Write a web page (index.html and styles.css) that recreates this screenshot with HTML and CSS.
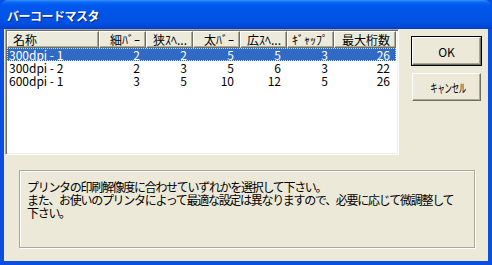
FILE: index.html
```html
<!DOCTYPE html>
<html lang="ja">
<head>
<meta charset="utf-8">
<link rel="stylesheet" href="styles.css">
</head>
<body>
<div class="window">
  <div class="titlebar"><span class="title">バーコードマスタ</span></div>
  <div class="frame">
    <div class="main">
      <div class="list">
        <div class="row head">
          <div class="c c1 l">名称</div>
          <div class="c c2">細ﾊﾞｰ</div>
          <div class="c c3">狭ｽﾍ...</div>
          <div class="c c4">太ﾊﾞｰ</div>
          <div class="c c5">広ｽﾍ...</div>
          <div class="c c6">ｷﾞｬｯﾌﾟ</div>
          <div class="c c7">最大桁数</div>
        </div>
        <div class="row sel">
          <div class="c c1 l">300dpi - 1</div>
          <div class="c c2">2</div>
          <div class="c c3">2</div>
          <div class="c c4">5</div>
          <div class="c c5">5</div>
          <div class="c c6">3</div>
          <div class="c c7">26</div>
        </div>
        <div class="row">
          <div class="c c1 l">300dpi - 2</div>
          <div class="c c2">2</div>
          <div class="c c3">3</div>
          <div class="c c4">5</div>
          <div class="c c5">6</div>
          <div class="c c6">3</div>
          <div class="c c7">22</div>
        </div>
        <div class="row">
          <div class="c c1 l">600dpi - 1</div>
          <div class="c c2">3</div>
          <div class="c c3">5</div>
          <div class="c c4">10</div>
          <div class="c c5">12</div>
          <div class="c c6">5</div>
          <div class="c c7">26</div>
        </div>
      </div>
      <div class="buttons">
        <button class="btn default">OK</button>
        <button class="btn"><span class="narrow">キャンセル</span></button>
      </div>
    </div>
    <div class="group">
      <p class="msg">プリンタの印刷解像度に合わせていずれかを選択して下さい。<br>また、お使いのプリンタによって最適な設定は異なりますので、必要に応じて微調整して<br>下さい。</p>
    </div>
  </div>
</div>
</body>
</html>
```

FILE: styles.css
```css
html, body {
  margin: 0;
  padding: 0;
  background: #ece9d8;
}
body {
  font-family: "Noto Sans CJK JP", "Liberation Sans", sans-serif;
  font-size: 12px;
  color: #000;
}
.window {
  width: 492px;
  height: 265px;
  display: flex;
  flex-direction: column;
  background: #0a4fe0;
}
.titlebar {
  height: 29px;
  flex: none;
  border-radius: 8px 8px 0 0;
  background: linear-gradient(to bottom, #3d95ff 0px, #0a6cf5 2px, #0058ee 5px, #0054e6 14px, #0052e2 22px, #0046d8 27px, #003dd0 29px);
  display: flex;
  align-items: center;
  padding-left: 7px;
  box-sizing: border-box;
}
.title {
  color: #fff;
  font-weight: bold;
  font-size: 12px;
  letter-spacing: -0.5px;
  text-shadow: 1px 1px 0 #0a1e8a;
  margin-top: 1px;
}
.frame {
  flex: 1;
  background: #ece9d8;
  margin: 0 4px 4px 4px;
  display: flex;
  flex-direction: column;
}
.main {
  display: flex;
  padding-left: 1px;
}
.list {
  width: 394px;
  height: 126px;
  box-sizing: border-box;
  background: #fff;
  border-top: 1px solid #aca899;
  border-left: 1px solid #aca899;
  border-right: 1px solid #fff;
  border-bottom: 1px solid #fff;
  box-shadow: inset 1px 1px 0 #716f64, inset -1px -1px 0 #f1efe2;
  padding: 1px;
}
.row {
  display: flex;
  height: 13px;
  line-height: 13px;
  width: 389px;
}
.row.head {
  height: 17px;
  line-height: 16px;
  background: #ebeadb;
}
.row.head .c {
  box-sizing: border-box;
  border-top: 1px solid #fff;
  border-left: 1px solid #fff;
  border-right: 1px solid #716f64;
  border-bottom: 1px solid #716f64;
  box-shadow: inset -1px -1px 0 #aca899;
  padding-right: 5px;
}
.row.head .c.l {
  padding-left: 5px;
}
.c {
  text-align: right;
  padding-right: 6px;
  box-sizing: border-box;
  white-space: nowrap;
}
.c.l {
  text-align: left;
  padding-left: 2px;
}
.c1 { width: 92px; }
.c2, .c3, .c4, .c5, .c6 { width: 47px; }
.c7 { width: 62px; }
.row.sel {
  background: #316ac5;
  color: #fff;
  outline: 1px dotted #e8e0a0;
  outline-offset: -1px;
}
.buttons {
  display: flex;
  flex-direction: column;
  gap: 8px;
  margin: 8px 0 0 13px;
}
.btn {
  width: 69px;
  height: 28px;
  font-family: "Noto Sans CJK JP", "Liberation Sans", sans-serif;
  font-size: 12px;
  background: #ece9d8;
  color: #000;
  padding: 0;
  border-top: 1px solid #fff;
  border-left: 1px solid #fff;
  border-right: 1px solid #716f64;
  border-bottom: 1px solid #716f64;
  box-shadow: inset -1px -1px 0 #aca899;
  white-space: nowrap;
}
.btn.default {
  outline: 1px solid #000;
}
.narrow {
  display: inline-block;
  width: 36px;
  transform: scaleX(0.62);
  transform-origin: center;
  letter-spacing: -0.5px;
  text-indent: -9px;
}
.group {
  margin: 15px 0 0 15px;
  width: 456px;
  height: 78px;
  box-sizing: border-box;
  border: 1px solid #aca899;
  box-shadow: 1px 1px 0 #fff, inset 1px 1px 0 #fff;
  padding: 9px 0 0 7px;
}
.msg {
  margin: 0;
  line-height: 13px;
  font-size: 12px;
  letter-spacing: -1.3px;
}
```
